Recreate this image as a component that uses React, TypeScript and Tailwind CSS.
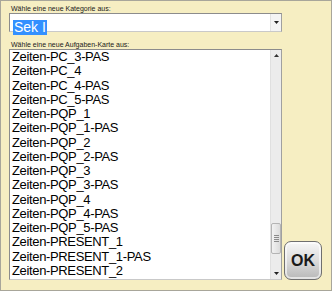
import React from 'react'

const items = [
  'Zeiten-PC_3-PAS',
  'Zeiten-PC_4',
  'Zeiten-PC_4-PAS',
  'Zeiten-PC_5-PAS',
  'Zeiten-PQP_1',
  'Zeiten-PQP_1-PAS',
  'Zeiten-PQP_2',
  'Zeiten-PQP_2-PAS',
  'Zeiten-PQP_3',
  'Zeiten-PQP_3-PAS',
  'Zeiten-PQP_4',
  'Zeiten-PQP_4-PAS',
  'Zeiten-PQP_5-PAS',
  'Zeiten-PRESENT_1',
  'Zeiten-PRESENT_1-PAS',
  'Zeiten-PRESENT_2',
]

function Arrow({ up }: { up?: boolean }) {
  return (
    <svg width="5" height="3" viewBox="0 0 5 3">
      {up ? <path d="M0 3 L2.5 0 L5 3 Z" fill="#333" /> : <path d="M0 0 L5 0 L2.5 3 Z" fill="#222" />}
    </svg>
  )
}

export default function App() {
  return (
    <div className="w-[332px] h-[291px] bg-[#f6eec2] border border-[#a8a69a] font-['Liberation_Sans',Arial,sans-serif] text-black overflow-hidden">
      <div className="pl-[8px] pt-[4px] flex flex-col">
        <div className="text-[7px] leading-[8px] text-[#1a1a1a] pl-[2px]">Wähle eine neue Kategorie aus:</div>

        {/* combobox */}
        <div className="w-[273px] h-[19px] bg-white border border-[#8c8c8c] border-b-[#c9c9c9] border-r-[#a0a0a0] flex">
          <div className="flex-1 pl-[3px] pt-[1px]">
            <span className="inline-block bg-[#3390ff] text-white text-[14px] leading-[15px] h-[15px] px-[1px]">Sek I</span>
          </div>
          <div className="w-[11px] h-full bg-[#f4f4f4] border-l border-[#e2e2e2] flex items-center justify-center">
            <Arrow />
          </div>
        </div>

        <div className="text-[7px] leading-[8px] text-[#1a1a1a] pl-[2px] mt-[9px]">Wähle eine neue Aufgaben-Karte aus:</div>

        <div className="flex items-end">
          {/* list box */}
          <div className="w-[273px] h-[231px] bg-white border border-[#8c8c8c] border-b-[#c9c9c9] border-r-[#a0a0a0] flex overflow-hidden">
            <div className="flex-1 pl-[2px] overflow-hidden">
              {items.map((item, i) => (
                <div key={i} className="text-[13px] leading-[14.27px] tracking-[-0.35px] whitespace-nowrap">
                  {item}
                </div>
              ))}
            </div>
            <div className="w-[11px] h-full bg-[#ececec] border-l border-[#e0e0e0] flex flex-col">
              <div className="h-[11px] flex items-center justify-center">
                <Arrow up />
              </div>
              <div className="h-[162px]" />
              <div className="h-[31px] rounded-[2px] border border-[#b4b4b4] bg-gradient-to-r from-[#f2f2f2] to-[#dcdcdc] flex flex-col items-center justify-center gap-[1px]">
                <div className="w-[5px] h-px bg-[#8a8a8a]" />
                <div className="w-[5px] h-px bg-[#8a8a8a]" />
                <div className="w-[5px] h-px bg-[#8a8a8a]" />
                <div className="w-[5px] h-px bg-[#8a8a8a]" />
              </div>
              <div className="flex-1" />
              <div className="h-[11px] flex items-center justify-center">
                <Arrow />
              </div>
            </div>
          </div>

          {/* OK button */}
          <button className="ml-[2px] w-[38px] h-[39px] rounded-[7px] border border-[#6f6f6f] bg-gradient-to-b from-[#f7f7f7] via-[#dcdcdc] to-[#b8b8b8] shadow-[inset_0_0_0_2px_rgba(255,255,255,0.6)] flex items-center justify-center">
            <span className="text-[16px] font-bold text-[#1a1a1a]">OK</span>
          </button>
        </div>
      </div>
    </div>
  )
}
